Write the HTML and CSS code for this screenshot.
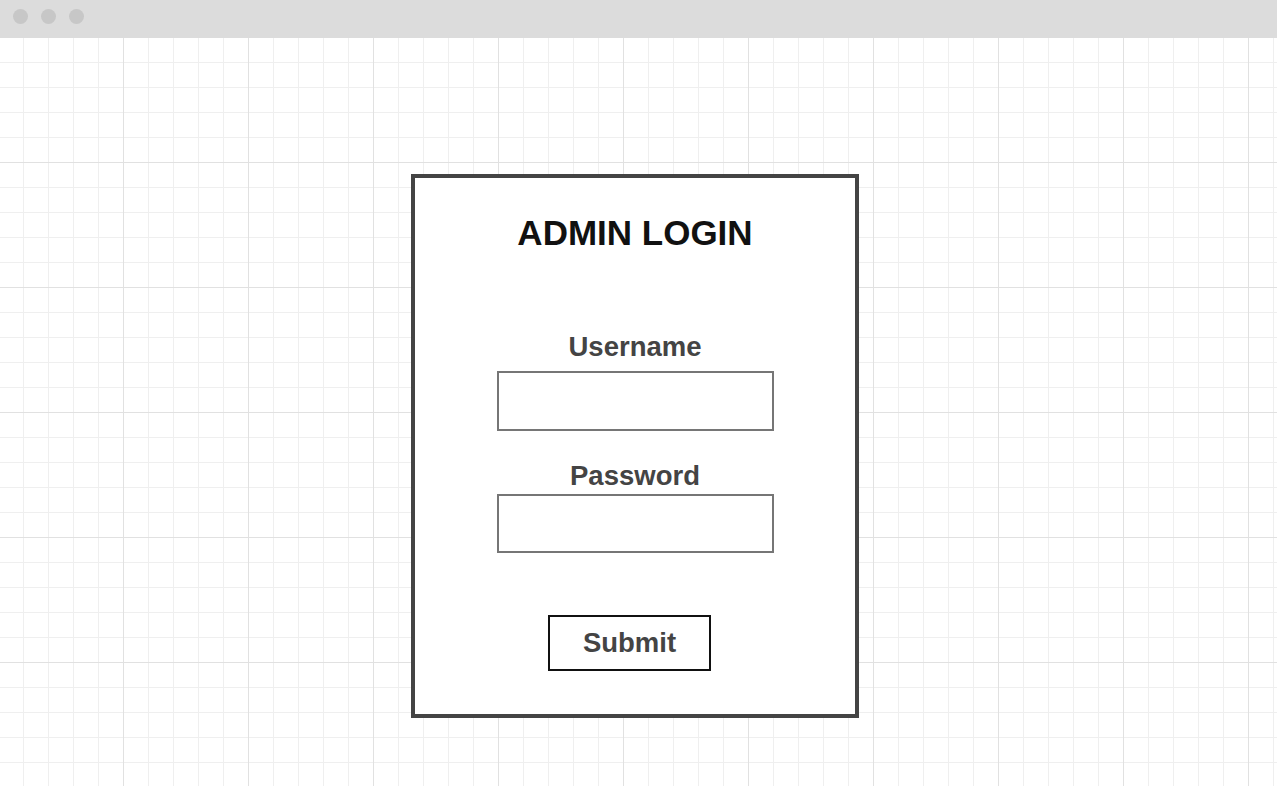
FILE: index.html
```html
<!DOCTYPE html>
<html lang="en">
<head>
<meta charset="utf-8">
<title>Admin Login</title>
<link rel="stylesheet" href="styles.css">
</head>
<body>
<div class="topbar">
  <span class="dot"></span>
  <span class="dot"></span>
  <span class="dot"></span>
</div>
<main class="canvas">
  <form class="card">
    <h1 class="title">ADMIN LOGIN</h1>
    <label class="label label-user" for="user">Username</label>
    <input class="field field-user" id="user" type="text">
    <label class="label label-pass" for="pass">Password</label>
    <input class="field field-pass" id="pass" type="password">
    <button class="submit" type="button">Submit</button>
  </form>
</main>
</body>
</html>
```
FILE: styles.css
```css
html, body {
  margin: 0;
  padding: 0;
  height: 100%;
}
body {
  font-family: "Liberation Sans", Arial, sans-serif;
  background: #ffffff;
  display: flex;
  flex-direction: column;
  overflow: hidden;
}
.topbar {
  height: 38px;
  flex: 0 0 38px;
  background: #dcdcdc;
  display: flex;
  align-items: flex-start;
  padding: 9px 0 0 13px;
  gap: 13px;
  box-sizing: border-box;
}
.dot {
  width: 15px;
  height: 15px;
  border-radius: 50%;
  background: #c7c7c7;
}
.canvas {
  flex: 1;
  display: flex;
  justify-content: center;
  align-items: flex-start;
  padding: 136px 7px 0 0;
  background-color: #ffffff;
  background-image:
    linear-gradient(to right, #e1e1e1 1px, transparent 1px),
    linear-gradient(to bottom, #e1e1e1 1px, transparent 1px),
    linear-gradient(to right, #efefef 1px, transparent 1px),
    linear-gradient(to bottom, #efefef 1px, transparent 1px);
  background-size: 125px 125px, 125px 125px, 25px 25px, 25px 25px;
  background-position: 123px 124px, 123px 124px, 23px 24px, 23px 24px;
}
.card {
  width: 448px;
  box-sizing: border-box;
  border: 4px solid #444444;
  background: #ffffff;
  display: flex;
  flex-direction: column;
  align-items: center;
  padding: 0 0 43px 0;
  margin: 0;
}
.title {
  margin: 35px 0 0 0;
  font-size: 35px;
  line-height: 40px;
  font-weight: bold;
  color: #111111;
}
.label {
  font-size: 27.5px;
  line-height: 32px;
  font-weight: bold;
  color: #444444;
}
.label-user {
  margin-top: 78px;
}
.label-pass {
  margin-top: 29px;
}
.field {
  width: 277px;
  box-sizing: border-box;
  border: 2px solid #767676;
  background: #ffffff;
  margin: 0;
  padding: 0;
  outline: none;
}
.field-user {
  height: 60px;
  margin-top: 8px;
}
.field-pass {
  height: 59px;
  margin-top: 2px;
}
.submit {
  margin: 62px 11px 0 0;
  width: 163px;
  height: 56px;
  box-sizing: border-box;
  border: 2px solid #111111;
  background: #ffffff;
  font-family: "Liberation Sans", Arial, sans-serif;
  font-size: 27.5px;
  font-weight: bold;
  color: #444444;
  padding: 0;
}
```
